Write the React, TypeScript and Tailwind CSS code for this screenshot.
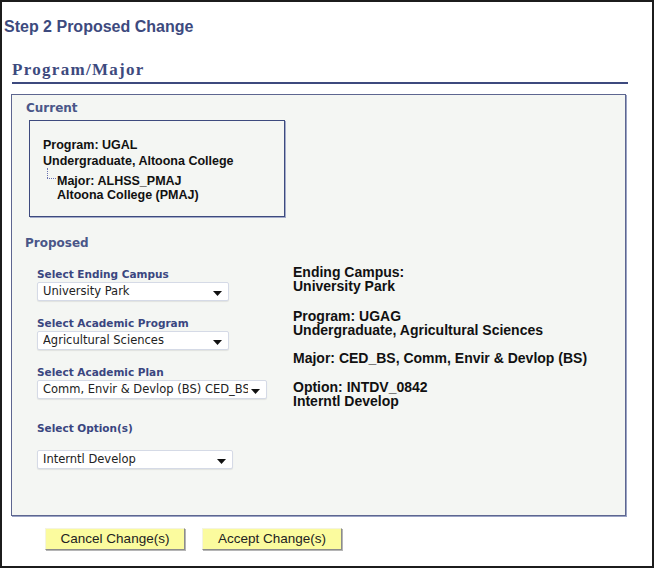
import React from 'react'

const arial = { fontFamily: '"Liberation Sans", Arial, sans-serif' }
const verdana = { fontFamily: '"DejaVu Sans", Verdana, sans-serif' }
const serif = { fontFamily: '"Liberation Serif", "Times New Roman", serif' }

function FakeSelect({ value, width }: { value: string; width: string }) {
  return (
    <div
      className={`${width} h-[19px] flex items-center bg-white border border-[#d5dae6] rounded-[2px] shadow-[0_1px_1px_rgba(0,0,0,0.08)] pl-[5px] pr-[6px] overflow-hidden`}
    >
      <span className="flex-1 min-w-0 text-[11.5px] text-[#222] whitespace-nowrap overflow-hidden" style={verdana}>
        {value}
      </span>
      <svg width="9" height="5" viewBox="0 0 9 5" className="shrink-0 ml-[3px] mt-[3px]">
        <path d="M0 0h9L4.5 5z" fill="#111" />
      </svg>
    </div>
  )
}

function Field({ label, value, width, gap }: { label: string; value: string; width: string; gap?: string }) {
  return (
    <div>
      <div className={`text-[10.5px] font-bold text-[#3a4680] leading-[13px] ${gap ?? 'mb-[1px]'}`} style={verdana}>
        {label}
      </div>
      <FakeSelect value={value} width={width} />
    </div>
  )
}

export default function App() {
  return (
    <div className="w-[654px] h-[568px] border-2 border-[#1c1c1c] bg-white">
      <h1 className="ml-[2px] mt-[15px] text-[16px] font-bold leading-[20px] text-[#3d4a7e]" style={arial}>
        Step 2 Proposed Change
      </h1>

      <div className="ml-[10px] mt-[23px] w-[616px] border-b-2 border-[#3d4a7e] pb-[2px]">
        <h2 className="text-[17px] font-bold leading-[20px] tracking-[1.3px] text-[#3d4a7e]" style={serif}>
          Program/Major
        </h2>
      </div>

      <div className="ml-[9px] mt-[10px] w-[615px] h-[422px] bg-[#f4f6f3] border border-[#5d6690] shadow-[1px_1px_0_#9aa3c4]">
        <div className="ml-[14px] mt-[5px] text-[12px] font-bold leading-[16px] text-[#4a5688]" style={verdana}>
          Current
        </div>
        <div
          className="ml-[17px] mt-[4px] w-[256px] h-[97px] border border-[#3d4a7e] shadow-[1px_1px_0_#a3abc9] pl-[13px] pt-[17px] text-[12.5px] font-bold text-[#111]"
          style={arial}
        >
          <div className="leading-[15.5px]">Program: UGAL</div>
          <div className="leading-[15.5px]">Undergraduate, Altoona College</div>
          <div className="flex mt-[6px]">
            <div className="w-[14px] shrink-0 relative">
              <div className="absolute left-[4px] -top-[7px] h-[10px] border-l border-dotted border-[#6a72b0]" />
              <div className="absolute left-[4px] top-[3px] w-[9px] border-t border-dotted border-[#6a72b0]" />
            </div>
            <div className="leading-[13.5px]">
              <div>Major: ALHSS_PMAJ</div>
              <div>Altoona College (PMAJ)</div>
            </div>
          </div>
        </div>

        <div className="ml-[13px] mt-[18px] text-[12px] font-bold leading-[16px] text-[#4a5688]" style={verdana}>
          Proposed
        </div>

        <div className="flex mt-[17px]">
          <div className="ml-[25px] w-[256px] flex flex-col">
            <Field label="Select Ending Campus" value="University Park" width="w-[192px]" />
            <div className="mt-[16px]">
              <Field label="Select Academic Program" value="Agricultural Sciences" width="w-[192px]" />
            </div>
            <div className="mt-[16px]">
              <Field label="Select Academic Plan" value="Comm, Envir & Devlop (BS) CED_BS" width="w-[230px]" />
            </div>
            <div className="mt-[23px]">
              <Field label="Select Option(s)" value="Interntl Develop" width="w-[196px]" gap="mb-[15px]" />
            </div>
          </div>

          <div className="-mt-[3px] text-[14px] font-bold leading-[14px] text-[#111]" style={arial}>
            <div>Ending Campus:</div>
            <div>University Park</div>
            <div className="mt-[16px]">Program: UGAG</div>
            <div className="leading-[15px]">Undergraduate, Agricultural Sciences</div>
            <div className="mt-[13px]">Major: CED_BS, Comm, Envir &amp; Devlop (BS)</div>
            <div className="mt-[15px]">Option: INTDV_0842</div>
            <div className="leading-[15px]">Interntl Develop</div>
          </div>
        </div>
      </div>

      <div className="flex gap-[17px] ml-[43px] mt-[12px]">
        {['Cancel Change(s)', 'Accept Change(s)'].map(label => (
          <button
            key={label}
            className="w-[140px] h-[22px] bg-[#fbfb9e] border border-t-[#f4f4e0] border-l-[#f4f4e0] border-r-[#8c8c8c] border-b-[#8c8c8c] shadow-[1px_1px_0_#b5b5b5] text-[13.5px] text-[#222] leading-[20px]"
            style={arial}
          >
            {label}
          </button>
        ))}
      </div>
    </div>
  )
}
